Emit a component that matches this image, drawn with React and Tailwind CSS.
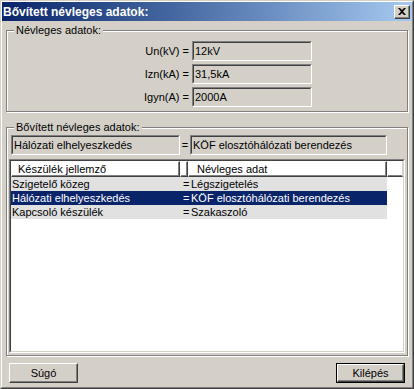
const face = "bg-[#d4d0c8]";

const Sunken = ({ className = "", children }) => (
  <div className={`border border-t-[#808080] border-l-[#808080] border-r-white border-b-white ${className}`}>
    <div className="h-full border border-t-[#404040] border-l-[#404040] border-r-[#d4d0c8] border-b-[#d4d0c8] pl-[1px] flex items-center overflow-hidden whitespace-nowrap">
      {children}
    </div>
  </div>
);

const Button = ({ label, isDefault }) => {
  const inner = (
    <div className="h-full border border-t-white border-l-white border-r-[#404040] border-b-[#404040] shadow-[inset_-1px_-1px_0_#808080] flex items-center justify-center">
      {label}
    </div>
  );
  return isDefault ? (
    <div className="w-[69px] h-[20px] border border-black">{inner}</div>
  ) : (
    <div className="w-[69px] h-[20px]">{inner}</div>
  );
};

const Group = ({ title, className = "", children }) => (
  <div className={`relative border border-[#808080] shadow-[inset_1px_1px_0_white,1px_1px_0_white] ${className}`}>
    <span className={`absolute left-[7px] top-[-8px] px-[2px] leading-[14px] ${face}`}>{title}</span>
    {children}
  </div>
);

const HeaderCell = ({ className = "", children }) => (
  <div className={`h-full border border-t-white border-l-white border-r-[#404040] border-b-[#404040] shadow-[inset_-1px_-1px_0_#808080] flex items-center whitespace-nowrap ${className}`}>
    {children}
  </div>
);

const rows = [
  { name: "Szigetelő közeg", value: "Légszigetelés" },
  { name: "Hálózati elhelyeszkedés", value: "KÖF elosztóhálózati berendezés", selected: true },
  { name: "Kapcsoló készülék", value: "Szakaszoló" },
];

const ratings = [
  { label: "Un(kV) =", value: "12kV" },
  { label: "Izn(kA) =", value: "31,5kA" },
  { label: "Igyn(A) =", value: "2000A" },
];

export default function App() {
  return (
    <div
      className={`w-[414px] h-[389px] ${face} border border-t-[#d4d0c8] border-l-[#d4d0c8] border-r-[#404040] border-b-[#404040] text-[11px] text-black`}
      style={{ fontFamily: '"Liberation Sans", Arial, sans-serif' }}
    >
      <div className="h-full flex flex-col border border-t-white border-l-white border-r-[#808080] border-b-[#808080]">
        {/* title bar */}
        <div className="h-[19px] flex items-center justify-between pl-[1px] pr-[2px] bg-gradient-to-r from-[#0a246a] to-[#a6caf0]">
          <span className="text-white font-bold text-[12px] leading-none">Bővített névleges adatok:</span>
          <div className="w-[16px] h-[14px] border border-t-white border-l-white border-r-[#404040] border-b-[#404040] shadow-[inset_-1px_-1px_0_#808080] bg-[#d4d0c8] flex items-center justify-center">
            <svg width="8" height="7" viewBox="0 0 8 7">
              <path d="M0 0h2l2 2 2-2h2L5 3.5 8 7H6L4 5 2 7H0l3-3.5z" fill="black" />
            </svg>
          </div>
        </div>

        <div className="flex-1 flex flex-col px-[4px]">
          <Group title="Névleges adatok:" className="mt-[9px] h-[82px]">
            <div className="pt-[10px] grid grid-cols-[182px_120px] gap-x-[3px] gap-y-[3px]">
              {ratings.map((r) => (
                <div key={r.label} className="contents">
                  <div className="h-[20px] flex items-center justify-end">{r.label}</div>
                  <Sunken className="h-[20px]">{r.value}</Sunken>
                </div>
              ))}
            </div>
          </Group>

          <Group title="Bővített névleges adatok:" className="mt-[15px] h-[229px] pl-[2px] pr-[2px]">
            <div className="mt-[7px] ml-[2px] flex items-center h-[20px]">
              <Sunken className="w-[169px] h-[20px]">Hálózati elhelyeszkedés</Sunken>
              <span className="w-[10px] text-center">=</span>
              <Sunken className="w-[197px] h-[20px]">KÖF elosztóhálózati berendezés</Sunken>
            </div>

            <div className="mt-[4px] h-[194px] border border-t-[#808080] border-l-[#808080] border-r-white border-b-white">
              <div className="h-full border border-t-[#404040] border-l-[#404040] border-r-[#d4d0c8] border-b-[#d4d0c8] bg-white overflow-hidden">
                <div className="flex h-[16px]">
                  <HeaderCell className="w-[169px] pl-[6px]">Készülék jellemző</HeaderCell>
                  <HeaderCell className="w-[8px]" />
                  <HeaderCell className="w-[199px] pl-[8px]">Névleges adat</HeaderCell>
                  <div className="flex-1 h-full border border-t-white border-l-white border-r-[#d4d0c8] border-b-[#404040] shadow-[inset_0_-1px_0_#808080]" />
                </div>
                {rows.map((row) => (
                  <div
                    key={row.name}
                    className={`flex h-[14px] w-[376px] items-center whitespace-nowrap ${
                      row.selected ? "bg-[#0a246a] text-white" : "bg-[#e1e1e1]"
                    }`}
                  >
                    <span className="w-[172px] pl-[1px]">{row.name}</span>
                    <span className="w-[8px]">=</span>
                    <span>{row.value}</span>
                  </div>
                ))}
              </div>
            </div>
          </Group>

          <div className="mt-[7px] flex justify-between px-[3px]">
            <Button label="Súgó" />
            <Button label="Kilépés" isDefault />
          </div>
        </div>
      </div>
    </div>
  );
}
